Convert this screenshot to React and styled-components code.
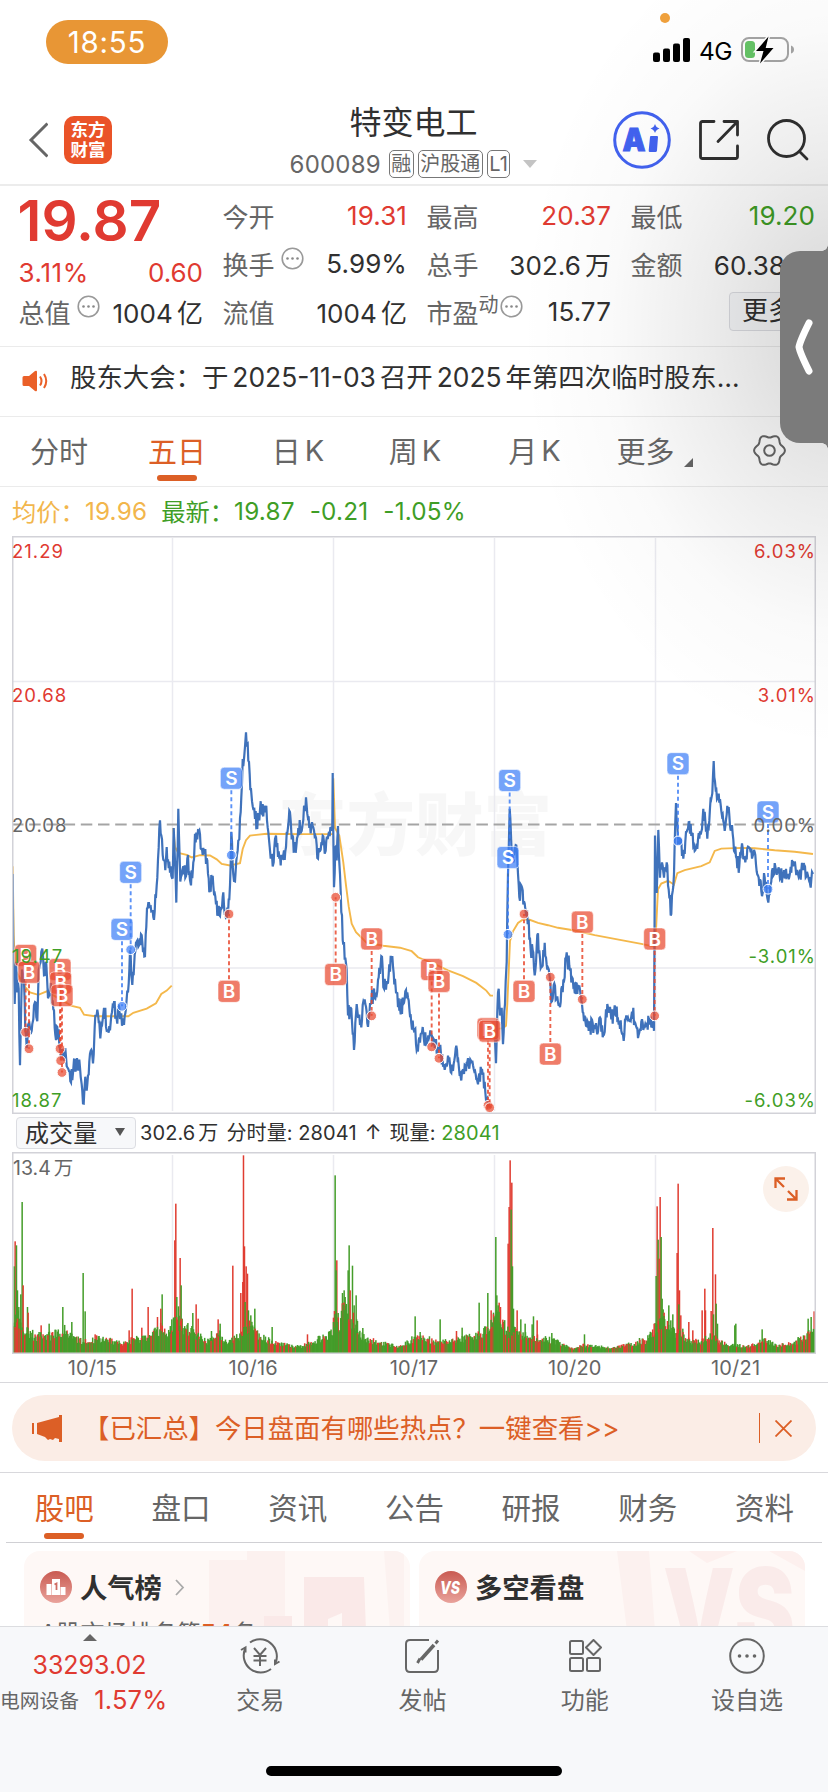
import React, { memo } from "react";
import styled, { createGlobalStyle, css } from "styled-components";

const RED = "#e03a31";
const GREEN = "#3f9e26";
const ORANGE = "#dc5f26";
const DARK = "#303030";
const GREY = "#666666";

const GlobalStyle = createGlobalStyle`
    * {
        box-sizing: border-box;
    }

    body {
        margin: 0;
        background: #fff;
        font-family: Inter, "Noto Sans CJK SC", sans-serif;
        color: ${DARK};
    }
`;

// --- styles ---

const underline = css`
    &::after {
        content: "";
        position: absolute;
        left: 50%;
        width: 40px;
        height: 6px;
        margin-left: -20px;
        border-radius: 3px;
        background: ${ORANGE};
    }
`;

const Page = styled.div`
    position: relative;
    display: flex;
    flex-direction: column;
    width: 828px;
    height: 1792px;
    overflow: hidden;
    background: #fff;
    white-space: nowrap;
`;

const StatusBar = styled.div`
    position: relative;
    display: flex;
    flex: none;
    justify-content: space-between;
    align-items: flex-start;
    height: 92px;
    padding: 20px 33px 0 46px;
`;

const Clock = styled.div`
    width: 122px;
    height: 44px;
    border-radius: 22px;
    background: #e89635;
    color: #fff;
    font-size: 29.5px;
    line-height: 45px;
    letter-spacing: 0.8px;
    text-align: center;
`;

const StatusIcons = styled.div`
    display: flex;
    align-items: center;
    gap: 8px;
    height: 60px;
`;

const Network = styled.div`
    margin: 2px 1px 0 0;
    font-size: 24.5px;
    letter-spacing: -0.5px;
    color: #000;
`;

const RecordDot = styled.div`
    position: absolute;
    top: 13px;
    left: 660px;
    width: 10px;
    height: 10px;
    border-radius: 50%;
    background: #f0a13c;
`;

const NavBar = styled.div`
    display: grid;
    flex: none;
    grid-template-columns: 1fr auto 1fr;
    height: 94px;
    padding: 0 19px 0 28px;
    border-bottom: 2px solid #ececec;
`;

const NavLeft = styled.div`
    display: flex;
    align-items: center;
    gap: 16px;
    height: 96px;
`;

const Logo = styled.div`
    display: flex;
    flex-direction: column;
    align-items: center;
    justify-content: center;
    width: 48px;
    height: 48px;
    padding-bottom: 1px;
    border-radius: 10px;
    background: #ea5328;
    color: #fff;
    font-size: 17.5px;
    font-weight: 700;
    line-height: 19.5px;
`;

const NavTitle = styled.div`
    display: flex;
    flex-direction: column;
    align-items: center;
    padding: 9px 10px 0 0;
`;

const StockName = styled.div`
    font-size: 32px;
    line-height: 44px;
`;

const StockMeta = styled.div`
    display: flex;
    align-items: center;
    height: 30px;
    margin-top: 4px;
    gap: 4px;
    color: ${GREY};
`;

const StockCode = styled.div`
    margin-right: 4px;
    font-size: 24px;
    letter-spacing: 0.2px;
`;

const Tag = styled.div`
    padding: 0 1.5px;
    border: 1.5px solid #777;
    border-radius: 5px;
    font-size: 20px;
    line-height: 26px;
`;

const MetaCaret = styled.div`
    margin-left: 9px;
    border: 7px solid transparent;
    border-top: 8px solid #c4c4c4;
    border-bottom: 0;
`;

const NavRight = styled.div`
    display: flex;
    justify-content: flex-end;
    align-items: center;
    gap: 27px;
    height: 96px;
`;

const QuotePanel = styled.div`
    display: grid;
    flex: none;
    grid-template-columns: repeat(4, 184.5px);
    grid-template-rows: repeat(3, 48px);
    column-gap: 19.5px;
    height: 161px;
    padding: 5px 0 0 18.5px;
    border-bottom: 1.5px solid #ebebeb;
`;

const Price = styled.div`
    grid-row: 1 / 3;
    color: ${RED};
`;

const PriceValue = styled.div`
    margin-left: -1px;
    font-size: 56.5px;
    font-weight: 600;
    line-height: 59px;
`;

const PriceChange = styled.div`
    display: flex;
    justify-content: space-between;
    margin-top: 5px;
    font-size: 26px;
    line-height: 36px;
`;

const ChangePercent = styled.span`
    letter-spacing: 0.6px;
`;

const QuoteCell = styled.div`
    display: flex;
    justify-content: space-between;
    align-items: center;
    height: 48px;
`;

const QuoteLabel = styled.div`
    display: flex;
    align-items: center;
    font-size: 26px;
    color: ${GREY};
`;

const Sup = styled.span`
    margin-bottom: 15px;
    font-size: 20px;
`;

const Info = styled.span`
    display: flex;
    margin-left: ${(props) => (props.$tight ? 1 : 6)}px;
    margin-bottom: 9px;
`;

const QuoteValue = styled.div`
    font-size: 26px;
    letter-spacing: 0.1px;
    color: ${(props) => props.$color || DARK};
`;

const Unit = styled.span`
    margin-left: 0.15em;
`;

const MoreCell = styled.div`
    display: flex;
    align-items: center;
    justify-content: flex-end;
`;

const MoreButton = styled.div`
    width: 86px;
    height: 39px;
    padding-left: 12px;
    border: 1.5px solid #dcdde2;
    border-radius: 4px;
    background: #f7f8fa;
    font-size: 26px;
    line-height: 35px;
`;

const Notice = styled.div`
    display: flex;
    flex: none;
    align-items: center;
    gap: 21px;
    height: 70px;
    padding: 0 0 12px 22px;
    border-bottom: 1.5px solid #ebebeb;

    svg {
        margin-top: 11px;
    }
`;

const NoticeText = styled.div`
    font-size: 26.4px;
`;

const Num = styled.span`
    margin: 0 4px;
`;

const Periods = styled.div`
    display: flex;
    flex: none;
    align-items: center;
    height: 70px;
    border-bottom: 1.5px solid #ebebeb;
`;

const Period = styled.div`
    position: relative;
    display: flex;
    flex: none;
    justify-content: center;
    align-items: center;
    width: ${(props) => props.$width}px;
    height: 68px;
    padding-bottom: 3px;
    font-size: 29px;
    color: ${(props) => (props.$active ? ORANGE : GREY)};

    ${(props) => (props.$active ? underline : null)}

    &::after {
        top: 57px;
    }
`;

const Latin = styled.span`
    margin-left: 4px;
`;

const Corner = styled.span`
    position: absolute;
    right: -1px;
    bottom: 19px;
    border-bottom: 9px solid ${GREY};
    border-left: 9px solid transparent;
`;

const Settings = styled.div`
    display: flex;
    justify-content: center;
    flex: 1;
    padding: 0 0 2px 19px;
`;

const Legend = styled.div`
    display: flex;
    flex: none;
    align-items: center;
    gap: 14px;
    height: 49px;
    padding: 0 0 2px 12px;
`;

const LegendItem = styled.div`
    display: flex;
    align-items: center;
    font-size: 24.3px;
    color: ${(props) => props.$color};
`;

const LegendNum = styled.span`
    letter-spacing: 0.2px;

    & + & {
        margin-left: 15px;
    }
`;

const ChartBox = styled.div`
    position: relative;
    flex: none;
    height: ${(props) => props.$height}px;
    margin: 0 12px;

    svg {
        display: block;
    }
`;

const Scale = styled.div`
    position: absolute;
    top: 0;
    ${(props) => (props.$right ? "right: 0;" : "left: 0;")}
`;

const ScaleLabel = styled.div`
    position: absolute;
    top: ${(props) => props.$top}px;
    ${(props) => (props.$right ? "right: 0;" : "left: 0;")}
    font-size: 18.5px;
    line-height: 22px;
    letter-spacing: 1px;
    color: ${(props) => props.$color};
`;

const VolumeHead = styled.div`
    display: flex;
    flex: none;
    align-items: center;
    gap: 8px;
    height: 38px;
    padding: 0 0 3px 16px;
    font-size: 20px;
    letter-spacing: 0.1px;
`;

const Select = styled.div`
    display: flex;
    justify-content: space-between;
    align-items: center;
    width: 120px;
    height: 32px;
    margin: 2px -4px 0 0;
    padding: 0 10px 2px 8px;
    border: 1px solid #dcdde2;
    border-radius: 4px;
    background: #f7f8fa;
    font-size: 24px;
`;

const SelectCaret = styled.span`
    border: 5px solid transparent;
    border-top: 8px solid #555;
    border-bottom: 0;
`;

const CurrentVolume = styled.span`
    color: ${GREEN};
`;

const VolumeMax = styled.div`
    position: absolute;
    top: 4px;
    left: 1px;
    font-size: 19.5px;
    line-height: 24px;
    color: ${GREY};
`;

const Expand = styled.div`
    position: absolute;
    top: 14px;
    right: 7px;
    display: flex;
    align-items: center;
    justify-content: center;
    width: 46px;
    height: 46px;
    border-radius: 50%;
    background: #fbf1ea;
`;

const Dates = styled.div`
    display: grid;
    flex: none;
    grid-template-columns: repeat(5, 1fr);
    height: 29px;
    padding: 0 12px;
    border-bottom: 1.5px solid #d8d8dc;
    font-size: 20px;
    line-height: 28px;
    letter-spacing: 0.2px;
    text-align: center;
    color: ${GREY};
`;

const PromoWrap = styled.div`
    flex: none;
    height: 90px;
    padding: 12px 12px 0;
    border-bottom: 1.5px solid #d8d8dc;
`;

const Promo = styled.div`
    display: flex;
    align-items: center;
    height: 66px;
    padding: 0 24px 0 20px;
    border-radius: 33px;
    background: #fbede6;
    color: ${ORANGE};
`;

const PromoText = styled.div`
    flex: 1;
    margin: 0 0 4px 20px;
    font-size: 26.4px;
`;

const PromoDivider = styled.div`
    width: 1.5px;
    height: 30px;
    margin-right: 15px;
    background: ${ORANGE};
`;

const Sections = styled.div`
    display: grid;
    flex: none;
    grid-template-columns: repeat(7, 116.7px);
    height: 70px;
    margin: 0 6px;
    border-bottom: 1.5px solid #d0d0d4;
`;

const Section = styled.div`
    position: relative;
    font-size: 29.5px;
    line-height: 70px;
    text-align: center;
    color: ${(props) => (props.$active ? ORANGE : GREY)};

    ${(props) => (props.$active ? underline : null)}

    &::after {
        top: 60px;
    }
`;

const Cards = styled.div`
    display: grid;
    flex: none;
    grid-template-columns: 386px 386px;
    gap: 9px;
    height: 83px;
    padding: 8px 0 0 24px;
    overflow: hidden;
`;

const Card = styled.div`
    position: relative;
    height: 120px;
    padding: 16px 16px 0;
    border-radius: 16px;
    background: #fef8f6;
    overflow: hidden;
`;

const CardArt = styled.svg`
    position: absolute;
    top: 0;
    left: 0;
`;

const CardHead = styled.div`
    position: relative;
    display: flex;
    align-items: center;
    height: 40px;
`;

const CardTitle = styled.div`
    margin: 0 13px 3px 8px;
    font-size: 27.3px;
    font-weight: 700;
`;

const CardText = styled.div`
    position: relative;
    margin-top: 9px;
    font-size: 24px;
    line-height: 36px;
    color: ${GREY};
`;

const Rank = styled.b`
    color: ${ORANGE};
`;

const BottomBar = styled.div`
    position: relative;
    display: grid;
    flex: 1;
    grid-template-columns: 179px repeat(4, 162.3px);
    border-top: 1.5px solid #dcdde0;
    background: #f7f8fa;
    color: ${GREY};
`;

const IndexCell = styled.div`
    display: flex;
    flex-direction: column;
    align-items: center;
    padding-top: 7px;
`;

const IndexCaret = styled.div`
    border: 7px solid transparent;
    border-top: 0;
    border-bottom: 7px solid ${GREY};
`;

const IndexValue = styled.div`
    margin-top: 8px;
    font-size: 25px;
    line-height: 32px;
    color: ${RED};
`;

const IndexRow = styled.div`
    display: flex;
    align-items: center;
    gap: 15px;
    align-self: flex-start;
    height: 36px;
`;

const IndexName = styled.div`
    font-size: 19.8px;
`;

const IndexChange = styled.div`
    font-size: 25.5px;
    letter-spacing: 0.2px;
    color: ${RED};
`;

const Action = styled.div`
    display: flex;
    flex-direction: column;
    align-items: center;
    font-size: 24px;
    line-height: 36px;
`;

const ActionIcon = styled.div`
    display: flex;
    align-items: center;
    height: 56px;
    padding-top: 2px;
`;

const HomeIndicator = styled.div`
    position: absolute;
    left: 266px;
    bottom: 16px;
    width: 296px;
    height: 10px;
    border-radius: 5px;
    background: #000;
`;

const Shade = styled.div`
    position: absolute;
    inset: 0;
    pointer-events: none;
    background: radial-gradient(
        ellipse 320px 420px at 840px 330px,
        rgba(0, 0, 0, 0.17),
        rgba(0, 0, 0, 0.075) 42%,
        rgba(0, 0, 0, 0.02) 72%,
        transparent
    );
`;

const Handle = styled.div`
    position: absolute;
    top: 251px;
    right: 0;
    display: flex;
    align-items: center;
    width: 48px;
    height: 192px;
    padding-left: 15px;
    border-radius: 20px 0 0 20px;
    background: #7b7b7b;

    &::before,
    &::after {
        content: "";
        position: absolute;
        right: 0;
        width: 6px;
        height: 6px;
    }

    &::before {
        top: -6px;
        background: radial-gradient(circle at 0 0, transparent 5.5px, #7b7b7b 6px);
    }

    &::after {
        bottom: -6px;
        background: radial-gradient(circle at 0 100%, transparent 5.5px, #7b7b7b 6px);
    }
`;

// --- data ---

const quotes = [
    { label: "今开", value: "19.31", color: RED },
    { label: "最高", value: "20.37", color: RED },
    { label: "最低", value: "19.20", color: GREEN },
    { label: "换手", value: "5.99%", info: true },
    { label: "总手", value: "302.6", unit: "万" },
    { label: "金额", value: "60.38", unit: "亿" },
    { label: "总值", value: "1004", unit: "亿", info: true },
    { label: "流值", value: "1004", unit: "亿" },
    { label: "市盈", sup: "动", value: "15.77", info: true },
];

const periods = [
    { title: "分时", width: 118 },
    { title: "五日", width: 118, active: true },
    { title: "日", latin: "K", width: 124 },
    { title: "周", latin: "K", width: 110 },
    { title: "月", latin: "K", width: 129 },
    { title: "更多", more: true, width: 93 },
];

const priceScale = [
    { top: 4, color: RED, price: "21.29", percent: "6.03%" },
    { top: 148, color: RED, price: "20.68", percent: "3.01%" },
    { top: 278, color: GREY, price: "20.08", percent: "0.00%" },
    { top: 409, color: GREEN, price: "19.47", percent: "-3.01%" },
    { top: 553, color: GREEN, price: "18.87", percent: "-6.03%" },
];

const sections = ["股吧", "盘口", "资讯", "公告", "研报", "财务", "资料"];

const dates = ["10/15", "10/16", "10/17", "10/20", "10/21"];

// chart samples are raw units, toX / toY turn them into pixels
const toX = (x) => x / 3 - 12;
const toY = (y) => (y - 17) / 2.6133;

const priceDays = [
    "38,900 40,1130 44,1240 48,1130 52,1210 56,1200 60,1400 66,1150 72,1180 76,1310 80,1355 86,1290 95,1310 100,1280 105,1235 112,1285 116,1150 122,1130 127,1095 132,1165 137,1130 144,1225 150,1200 158,1230 166,1320 172,1300 180,1356 190,1380 196,1355 205,1410 213,1445 222,1385 229,1410 238,1385 245,1450 251,1500 256,1430 262,1450 270,1370 279,1395 284,1300 292,1255 301,1330 312,1250 326,1315 334,1270 342,1235 350,1280 358,1250 368,1290 376,1265 384,1210 390,1100 397,1190 404,1110 415,1090 425,1060 435,1115 441,990 452,985 462,1020 470,930 480,760 488,850 496,890 500,830 506,885 512,880 518,910 521,780 529,975 535,730 541,920 550,880 556,910 562,860 573,930 580,870 585,795 592,810 598,785 608,850 616,835 624,900 630,940 638,905 648,980 660,1010 668,960 676,1000 684,1005 690,930 694,790 698,880 705,920 711,850 718,810 724,700 728,600 733,590 738,530 743,560 749,640 756,710 763,730 772,780 782,710 790,750 797,730 805,790 812,860 821,870 828,800 838,860 848,860 858,830 868,735 875,810 887,845 895,780 908,770 918,700 928,780 936,765 946,800 954,860 968,800 977,840 987,790 997,775 998,636 1002,935 1006,830 1010,865 1014,775 1018,870 1024,1000 1030,1085 1040,1150 1044,1270 1052,1250 1062,1360 1070,1240 1082,1290 1092,1240 1102,1290 1112,1240 1120,1210 1128,1215 1136,1170 1144,1115 1152,1200 1160,1180 1177,1115 1188,1210 1200,1250 1210,1240 1222,1210 1232,1270 1242,1310 1254,1360 1268,1300 1279,1350 1294,1320 1306,1350 1319,1360 1332,1400 1344,1375 1359,1415 1371,1360 1384,1440 1396,1400 1411,1385 1421,1410 1434,1450 1446,1410 1456,1470 1464,1505 1470,1510",
    "1483,1330 1488,1395 1492,1260 1496,1200 1500,1270 1505,1250 1509,1345 1515,1240 1520,1130 1524,900 1529,730 1534,820 1540,870 1547,825 1554,900 1560,970 1564,930 1570,980 1579,1010 1586,1020 1592,1100 1598,1100 1604,1165 1612,1060 1620,1120 1628,1140 1634,1080 1642,1150 1649,1170 1654,1235 1661,1190 1672,1220 1682,1235 1690,1180 1698,1120 1708,1140 1716,1170 1724,1210 1734,1190 1744,1230 1754,1270 1766,1310 1778,1290 1790,1310 1800,1275 1812,1320 1822,1240 1834,1280 1846,1250 1858,1285 1869,1320 1882,1280 1896,1260 1906,1290 1916,1320 1926,1280 1939,1300 1952,1275 1962,1310 1965,800 1970,950 1975,785 1980,910 1986,870 1992,910 2000,870 2008,960 2014,1005 2022,900 2028,715 2034,820 2042,810 2050,860 2060,790 2072,770 2084,840 2094,810 2104,790 2110,730 2118,790 2126,780 2132,700 2137,690 2141,605 2147,680 2154,700 2162,720 2172,770 2184,740 2194,780 2202,840 2210,860 2218,880 2226,820 2236,870 2246,830 2256,860 2266,850 2276,910 2284,945 2294,910 2305,975 2314,920 2326,880 2342,910 2352,890 2364,900 2379,880 2394,900 2409,890 2424,905 2430,925 2439,900",
];

const averageDays = [
    "38,880 41,1060 45,1150 75,1195 90,1210 115,1216 140,1207 155,1215 215,1245 240,1250 252,1268 285,1272 385,1272 400,1263 440,1252 468,1238 484,1214 500,1205 515,1192",
    "520,780 525,830 535,845 560,850 575,857 600,851 630,852 650,862 665,874 690,878 720,872 728,835 738,812 750,800 800,795 900,796 998,796",
    "1000,650 1005,780 1018,800 1030,870 1038,930 1046,985 1055,1030 1068,1052 1100,1080 1150,1088 1200,1093 1235,1102 1254,1118 1304,1136 1344,1152 1389,1167 1429,1185 1459,1205 1471,1218 1479,1218",
    "1483,1330 1494,1305 1509,1303 1518,1297 1522,1240 1530,1075 1539,1050 1554,1028 1569,1019 1589,1020 1614,1028 1644,1034 1674,1041 1724,1048 1784,1060 1864,1073 1924,1083 1962,1090",
    "1965,1100 1974,940 1984,925 2004,918 2022,928 2032,898 2054,890 2104,880 2129,870 2144,840 2164,834 2224,832 2264,833 2324,838 2384,842 2439,848",
];

// [side, x, badge y, dot y]
const trades = [
    ["B", 77, 1113, 1314],
    ["B", 87, 1157, 1357],
    ["B", 180, 1150, 1357],
    ["B", 182, 1185, 1388],
    ["B", 186, 1218, 1419],
    ["S", 366, 1045, 1246],
    ["S", 392, 896, 1098],
    ["S", 694, 650, 851],
    ["B", 687, 1207, 1005],
    ["B", 1007, 1163, 961],
    ["B", 1115, 1070, 1271],
    ["B", 1295, 1150, 1352],
    ["B", 1317, 1181, 1382],
    ["B", 1464, 1305, 1505],
    ["B", 1469, 1311, 1511],
    ["S", 1529, 656, 857],
    ["S", 1524, 857, 1058],
    ["B", 1572, 1207, 1005],
    ["B", 1651, 1371, 1170],
    ["B", 1747, 1026, 1228],
    ["B", 1964, 1070, 1271],
    ["S", 2034, 612, 814],
    ["S", 2304, 738, 940],
];

const volumeBase =
    "38,120 70,80 100,50 140,45 190,70 215,45 250,30 290,40 380,25 400,40 440,40 480,70 500,55 520,95 550,80 580,60 620,30 660,60 680,25 720,50 750,80 780,45 830,25 900,15 960,40 995,60 1010,110 1020,80 1030,170 1040,110 1050,100 1070,90 1080,50 1110,35 1150,25 1200,15 1240,40 1260,55 1300,30 1380,40 1440,50 1480,95 1500,110 1520,60 1540,70 1560,50 1620,40 1660,35 1720,8 1750,20 1840,12 1940,35 1965,70 1985,100 2010,60 2040,60 2060,35 2100,30 2140,50 2160,30 2240,15 2290,35 2330,20 2380,25 2420,50 2444,90";

const volumeSpikes = {
    up: "45,393 69,525 84,607 123,645 285,672 396,535 387,660 425,652 444,590 472,620 482,595 524,390 527,280 540,443 588,582 594,625 654,627 698,466 722,548 728,515 730,135 733,408 738,468 742,490 922,672 1000,622 1003,602 1010,450 1050,540 1369,662 1473,600 1497,577 1501,590 1508,628 1524,400 1527,290 1530,150 1535,217 1551,600 1611,630 1962,640 1971,288 1977,445 1980,260 1992,607 2002,632 2031,428 2034,220 2038,540 2042,615 2066,635 2078,660 2106,600 2114,535 2116,600 2133,602 2138,353 2146,492 2442,603",
    down: "42,468 49,405 52,540 66,275 56,590 62,552 82,590 147,640 188,590 215,635 249,488 255,603 486,552 515,627 530,560 543,525 535,588 546,625 578,608 634,662 660,640 735,575 745,600 752,615 764,595 816,650 1005,195 1008,480 1014,608 1027,548 1032,540 1035,560 1044,480 1047,405 1057,466 1062,585 1068,555 1072,632 1088,653 1245,618 1260,665 1320,627 1386,652 1437,577 1463,548 1480,607 1487,380 1490,555 1494,585 1533,298 1537,468 1540,595 1562,627 1575,640 1600,618 1596,642 1655,668 1753,672 1918,683 1968,497 1974,388 1983,380 1986,565 1989,597 2006,585 2012,630 2018,612 2036,582 2048,655 2140,612 2148,580 2152,640 2204,645 2207,640 2286,657 2394,680 2410,675 2424,625 2433,620",
};

const parse = (str) => str.split(" ").map((pair) => pair.split(",").map(Number));

const createRandom = (seed) => () => {
    seed = (seed * 16807) % 2147483647;
    return seed / 2147483647;
};

const valueAt = (points, x) => {
    const i = points.findIndex((point) => point[0] >= x);
    if (i < 1) return points[0][1];
    const [x0, y0] = points[i - 1];
    const [x1, y1] = points[i];
    return y0 + ((y1 - y0) * (x - x0)) / (x1 - x0);
};

const toPoints = (list) =>
    list.map(([x, y]) => `${toX(x).toFixed(1)},${toY(y).toFixed(1)}`).join(" ");

const buildPrice = (str, seed) => {
    const random = createRandom(seed);
    const keys = parse(str);
    const result = [];
    keys.forEach(([x, y], i) => {
        result.push([x, y]);
        const next = keys[i + 1];
        if (!next) return;
        for (let step = x + 2; step < next[0] - 1; step += 2) {
            result.push([step, valueAt(keys, step) + (random() - 0.5) * 46]);
        }
    });
    return toPoints(result);
};

const buildVolume = () => {
    const random = createRandom(77);
    const base = parse(volumeBase);
    const bars = [];
    for (let x = 40; x < 2443; x += 2.4) {
        const height = 4 + valueAt(base, x) * (0.65 + random() * 0.6);
        bars.push({ x, height, up: random() > 0.7 });
    }
    parse(volumeSpikes.up).forEach(([x, y]) =>
        bars.push({ x, height: 728 - y, up: true })
    );
    parse(volumeSpikes.down).forEach(([x, y]) =>
        bars.push({ x, height: 728 - y, up: false })
    );
    // tall bars first, so the short ones stay visible in front
    return bars.sort((a, b) => b.height - a.height);
};

const buildGear = () => {
    const points = [];
    for (let i = 0; i < 72; i++) {
        const angle = (i * Math.PI) / 36;
        const radius = 13.9 + 1.5 * Math.cos(6 * angle);
        const x = 16.5 + radius * Math.cos(angle);
        const y = 16.5 + radius * 1.04 * Math.sin(angle);
        points.push(`${x.toFixed(2)},${y.toFixed(2)}`);
    }
    return points.join(" ");
};

const priceLines = priceDays.map((day, key) => buildPrice(day, key + 11));
const averageLines = averageDays.map((day) => toPoints(parse(day)));
const volumeBars = buildVolume();
const gearPoints = buildGear();

// --- icons ---

const SignalIcon = () => (
    <svg width="38" height="24" viewBox="0 0 38 24">
        <rect x="0" y="14.5" width="7" height="9.5" rx="2" />
        <rect x="10" y="10.5" width="7" height="13.5" rx="2" />
        <rect x="20" y="5.5" width="7" height="18.5" rx="2" />
        <rect x="30" y="0" width="7" height="24" rx="2" />
    </svg>
);

const BatteryIcon = () => (
    <svg width="54" height="28" viewBox="0 0 54 28">
        <rect x="1" y="2" width="46" height="23" rx="7" fill="none" stroke="#a5a5a5" strokeWidth="2" />
        <path d="M50 9.5q3 1 3 4t-3 4z" fill="#a5a5a5" />
        <rect x="4" y="5" width="10" height="17" rx="3.5" fill="#65c466" />
        <path
            d="M27.5 0.5L15 15h7.5l-3.5 12.5L32.5 12h-7.8z"
            stroke="#fff"
            strokeWidth="3"
            paintOrder="stroke"
        />
    </svg>
);

const BackIcon = () => (
    <svg width="20" height="36" viewBox="0 0 20 36" fill="none" stroke="#666" strokeWidth="3">
        <path d="M19.5 1.500L3 18l16.500 16.500" />
    </svg>
);

const AiIcon = () => (
    <svg width="58" height="58" viewBox="0 0 58 58">
        <circle cx="29" cy="29" r="27.3" fill="#fff" stroke="#4262f0" strokeWidth="3" />
        <text x="9.5" y="40" fontSize="31" fontWeight="900" fill="#4262f0" fontFamily="Inter" stroke="#4262f0" strokeWidth="1" textLength="23" lengthAdjust="spacingAndGlyphs">
            A
        </text>
        <path d="M38 25h6q1 0 1 1l-1 13.500q-.2 1.500-1.500 1.500H37q-1.500 0-1.300-1.500L37 26q0-1 1-1z" fill="#4262f0" />
        <path d="M42 13q1 3.500 4.500 4.500q-3.500 1-4.500 4.500q-1-3.500-4.500-4.500q3.500-1 4.500-4.500z" fill="#4262f0" />
    </svg>
);

const ShareIcon = () => (
    <svg width="42" height="42" viewBox="0 0 42 42" fill="none" stroke="#303030" strokeWidth="2.8" strokeLinecap="round" strokeLinejoin="round">
        <path d="M16 2.500H4.500q-2 0-2 2v33q0 2 2 2h33q2 0 2-2V27" />
        <path d="M26 2.500h13.500V16M39 3L20 22.500" />
    </svg>
);

const SearchIcon = () => (
    <svg width="42" height="42" viewBox="0 0 42 42" fill="none" stroke="#303030" strokeWidth="2.8" strokeLinecap="round">
        <circle cx="19.5" cy="19.5" r="18" />
        <path d="M32.500 32.500l7.500 7.500" />
    </svg>
);

const InfoIcon = () => (
    <svg width="23" height="23" viewBox="0 0 23 23" fill="#888">
        <circle cx="11.5" cy="11.5" r="10.3" fill="none" stroke="#999" strokeWidth="1.6" />
        <circle cx="6.5" cy="11.5" r="1.3" />
        <circle cx="11.5" cy="11.5" r="1.3" />
        <circle cx="16.5" cy="11.5" r="1.3" />
    </svg>
);

const SpeakerIcon = () => (
    <svg width="27" height="22" viewBox="0 0 27 22">
        <path d="M2 6h5l6-5q2-1 2 1v18q0 2-2 1l-6-5H2q-1.500 0-1.500-1.500v-7Q.5 6 2 6z" fill="#ea6028" />
        <path d="M18 6.500q3 4.500 0 9M22 4q4.500 7 0 14" fill="none" stroke="#ea6028" strokeWidth="2" />
    </svg>
);

const GearIcon = () => (
    <svg width="33" height="33" viewBox="0 0 33 33" fill="none" stroke="#666" strokeWidth="2">
        <polygon points={gearPoints} strokeLinejoin="round" />
        <circle cx="16.5" cy="16.5" r="5.3" />
    </svg>
);

const ExpandIcon = () => (
    <svg width="24" height="24" viewBox="0 0 24 24" fill="none" stroke={ORANGE} strokeWidth="2.3">
        <path d="M1.500 11V1.500H11M1.500 1.500l8.500 8.500M22.500 13v9.500H13M22.500 22.500L14 14" />
    </svg>
);

const HornIcon = () => (
    <svg width="31" height="27" viewBox="0 0 31 27" fill={ORANGE}>
        <path d="M0 8h2v11H0zM5 8L27 2V0h3v27h-3v-3l-4-1-2 2-3-1-2 1-3-3-8-3z" />
    </svg>
);

const CloseIcon = () => (
    <svg width="17" height="17" viewBox="0 0 17 17" fill="none" stroke={ORANGE} strokeWidth="1.8">
        <path d="M.5.5l16 16M16.500.5l-16 16" />
    </svg>
);

const RankIcon = () => (
    <svg width="32" height="32" viewBox="0 0 32 32">
        <defs>
            <linearGradient id="badge" x1="0" y1="0" x2="0" y2="1">
                <stop offset="0" stopColor="#c95b52" />
                <stop offset="1" stopColor="#e9a29b" />
            </linearGradient>
        </defs>
        <circle cx="16" cy="16" r="16" fill="url(#badge)" />
        <path d="M6.500 13h5v11h-5zM12 8h8v16h-8zM20.500 16h5v8h-5z" fill="#fff" />
        <path d="M14.500 13.500l2-1v6.500" stroke="#cf6d65" strokeWidth="1.8" fill="none" />
    </svg>
);

const VersusIcon = () => (
    <svg width="32" height="32" viewBox="0 0 32 32">
        <circle cx="16" cy="16" r="16" fill="url(#badge)" />
        <text x="15" y="22.5" textAnchor="middle" fontSize="18" fontWeight="800" fontStyle="italic" fill="#fff" fontFamily="Inter" textLength="20" lengthAdjust="spacingAndGlyphs">
            VS
        </text>
    </svg>
);

const TradeIcon = () => (
    <svg width="40" height="36" viewBox="0 0 40 36" fill="none" stroke="#666" strokeWidth="2">
        <path d="M10 4.500A17 17 0 0 1 35.500 25M31 31A17 17 0 0 1 5 11" />
        <path d="M1 12l4.500-2.500v5M39.500 23.500L35 26v-4.500M14 10l6 7 6-7M20 17v11M13.500 18h13M13.500 22.500h13" />
    </svg>
);

const PostIcon = () => (
    <svg width="36" height="36" viewBox="0 0 36 36" fill="none" stroke="#666" strokeWidth="2">
        <path d="M25 2H6Q2 2 2 6v24q0 4 4 4h24q4 0 4-4V12" />
        <path d="M30 7L17 21.500" strokeWidth="3.6" />
        <path d="M31.500 5.500L34 2.500M16 20.500l-2.500 4.500" strokeWidth="2.8" />
    </svg>
);

const ToolsIcon = () => (
    <svg width="34" height="34" viewBox="0 0 34 34" fill="none" stroke="#666" strokeWidth="2">
        <rect x="2" y="2" width="13" height="13" rx="1.5" />
        <rect x="2" y="19" width="13" height="13" rx="1.5" />
        <rect x="19" y="19" width="13" height="13" rx="1.5" />
        <path d="M25.500 1l7.500 7.500-7.500 7.500L18 8.500z" strokeLinejoin="round" />
    </svg>
);

const OptionalIcon = () => (
    <svg width="36" height="36" viewBox="0 0 36 36" fill="#666">
        <circle cx="18" cy="18" r="16.8" fill="none" stroke="#666" strokeWidth="2" />
        <circle cx="10.5" cy="18" r="1.8" />
        <circle cx="18" cy="18" r="1.8" />
        <circle cx="25.5" cy="18" r="1.8" />
    </svg>
);

const actions = [
    { title: "交易", Icon: TradeIcon },
    { title: "发帖", Icon: PostIcon },
    { title: "功能", Icon: ToolsIcon },
    { title: "设自选", Icon: OptionalIcon },
];

// --- components ---

const Quote = ({ label, sup, value, unit, info, color }) => (
    <QuoteCell>
        <QuoteLabel>
            {label}
            {sup ? <Sup>{sup}</Sup> : null}
            {info ? (
                <Info $tight={Boolean(sup)}>
                    <InfoIcon />
                </Info>
            ) : null}
        </QuoteLabel>
        <QuoteValue $color={color}>
            {value}
            {unit ? <Unit>{unit}</Unit> : null}
        </QuoteValue>
    </QuoteCell>
);

const Trade = memo(({ side, x, badgeY, dotY }) => {
    const color = side === "S" ? "#3f7ff6" : "#e9492f";
    const cx = toX(x);
    const by = toY(badgeY);
    const dy = toY(dotY);
    return (
        <g>
            <line x1={cx} x2={cx} y1={by + (dy > by ? 12 : -12)} y2={dy} stroke={color} strokeWidth="1.9" strokeDasharray="4 3" opacity="0.85" />
            <circle cx={cx} cy={dy} r="4.9" fill={color} fillOpacity="0.72" stroke="#fff" strokeWidth="1" />
            <rect x={cx - 11} y={by - 11} width="22" height="22" rx="4" fill={color} fillOpacity="0.72" stroke="#fff" strokeWidth="0.8" strokeOpacity="0.7" />
            <text x={cx} y={by + 6.8} textAnchor="middle" fontSize="19" fontWeight="600" fill="#fff" fontFamily="Inter">
                {side}
            </text>
        </g>
    );
});

const PriceChart = () => (
    <ChartBox $height={578}>
        <svg width="804" height="578" viewBox="0 0 804 578">
            <text x="266" y="314" fontSize="68.5" fontWeight="900" fill="#000" fillOpacity="0.03" fontFamily="Noto Sans CJK SC">
                东方财富
            </text>
            <path
                d="M0 145.500H804M0 432H804M160.500 2V575M321.500 2V575M482.500 2V575M643.500 2V575"
                stroke="#eaeaf0"
                strokeWidth="1.5"
            />
            <path d="M0 288.500H804" stroke="#a5a5a5" strokeWidth="1.8" strokeDasharray="11.5 5.7" />
            {averageLines.map((points, key) => (
                <polyline key={key} points={points} fill="none" stroke="#f4b84b" strokeWidth="1.9" />
            ))}
            {priceLines.map((points, key) => (
                <polyline key={key} points={points} fill="none" stroke="#3f72bb" strokeWidth="2.2" />
            ))}
            {trades.map(([side, x, badgeY, dotY], key) => (
                <Trade key={key} side={side} x={x} badgeY={badgeY} dotY={dotY} />
            ))}
            <rect x="0.75" y="0.75" width="802.5" height="576.5" fill="none" stroke="#d2d2d8" strokeWidth="1.5" />
        </svg>
        <Scale>
            {priceScale.map(({ top, color, price }) => (
                <ScaleLabel key={top} $top={top} $color={color}>
                    {price}
                </ScaleLabel>
            ))}
        </Scale>
        <Scale $right>
            {priceScale.map(({ top, color, percent }) => (
                <ScaleLabel key={top} $right $top={top} $color={color}>
                    {percent}
                </ScaleLabel>
            ))}
        </Scale>
    </ChartBox>
);

const VolumeChart = () => (
    <ChartBox $height={202}>
        <svg width="804" height="202" viewBox="0 0 804 202">
            <path d="M160.500 3V201M321.500 3V201M482.500 3V201M643.500 3V201" stroke="#eaeaf0" strokeWidth="1.5" />
            {volumeBars.map(({ x, height, up }, key) => (
                <rect
                    key={key}
                    x={toX(x) - 0.6}
                    y={201 - height / 3}
                    width="1.5"
                    height={height / 3}
                    fill={up ? "#e03c31" : "#449d2a"}
                />
            ))}
            <rect x="0.75" y="0.75" width="802.5" height="200.5" fill="none" stroke="#d2d2d8" strokeWidth="1.5" />
        </svg>
        <VolumeMax>
            13.4<Unit>万</Unit>
        </VolumeMax>
        <Expand>
            <ExpandIcon />
        </Expand>
    </ChartBox>
);

const App = () => (
    <Page>
        <GlobalStyle />
        <StatusBar>
            <Clock>18:55</Clock>
            <StatusIcons>
                <SignalIcon />
                <Network>4G</Network>
                <BatteryIcon />
            </StatusIcons>
            <RecordDot />
        </StatusBar>
        <NavBar>
            <NavLeft>
                <BackIcon />
                <Logo>
                    <span>东方</span>
                    <span>财富</span>
                </Logo>
            </NavLeft>
            <NavTitle>
                <StockName>特变电工</StockName>
                <StockMeta>
                    <StockCode>600089</StockCode>
                    <Tag>融</Tag>
                    <Tag>沪股通</Tag>
                    <Tag>L1</Tag>
                    <MetaCaret />
                </StockMeta>
            </NavTitle>
            <NavRight>
                <AiIcon />
                <ShareIcon />
                <SearchIcon />
            </NavRight>
        </NavBar>
        <QuotePanel>
            <Price>
                <PriceValue>19.87</PriceValue>
                <PriceChange>
                    <ChangePercent>3.11%</ChangePercent>
                    <span>0.60</span>
                </PriceChange>
            </Price>
            {quotes.map((quote) => (
                <Quote key={quote.label} {...quote} />
            ))}
            <MoreCell>
                <MoreButton>更多</MoreButton>
            </MoreCell>
        </QuotePanel>
        <Notice>
            <SpeakerIcon />
            <NoticeText>
                股东大会：于<Num>2025-11-03</Num>召开<Num>2025</Num>年第四次临时股东…
            </NoticeText>
        </Notice>
        <Periods>
            {periods.map(({ title, latin, width, active, more }) => (
                <Period key={title} $width={width} $active={active}>
                    {title}
                    {latin ? <Latin>{latin}</Latin> : null}
                    {more ? <Corner /> : null}
                </Period>
            ))}
            <Settings>
                <GearIcon />
            </Settings>
        </Periods>
        <Legend>
            <LegendItem $color="#f2b64c">
                均价：<LegendNum>19.96</LegendNum>
            </LegendItem>
            <LegendItem $color={GREEN}>
                最新：<LegendNum>19.87</LegendNum>
                <LegendNum>-0.21</LegendNum>
                <LegendNum>-1.05%</LegendNum>
            </LegendItem>
        </Legend>
        <PriceChart />
        <VolumeHead>
            <Select>
                成交量
                <SelectCaret />
            </Select>
            <span>
                302.6<Unit>万</Unit>
            </span>
            <span>分时量: 28041</span>
            <span>↑</span>
            <span>
                现量: <CurrentVolume>28041</CurrentVolume>
            </span>
        </VolumeHead>
        <VolumeChart />
        <Dates>
            {dates.map((date) => (
                <span key={date}>{date}</span>
            ))}
        </Dates>
        <PromoWrap>
            <Promo>
                <HornIcon />
                <PromoText>【已汇总】今日盘面有哪些热点？一键查看&gt;&gt;</PromoText>
                <PromoDivider />
                <CloseIcon />
            </Promo>
        </PromoWrap>
        <Sections>
            {sections.map((title, key) => (
                <Section key={title} $active={key === 0}>
                    {title}
                </Section>
            ))}
        </Sections>
        <Cards>
            <Card>
                <CardArt width="386" height="80" viewBox="0 0 386 80">
                    <path d="M185 9h38V0h38v80h-76z" fill="#fcf1ef" />
                    <path d="M280 26h60l2 54h-24V62l-14 6v12h-24zM240 65h28v15h-28z" fill="#fae9e8" />
                    <path d="M360 0h20v80h-14z" fill="#fcf2f0" />
                </CardArt>
                <CardHead>
                    <RankIcon />
                    <CardTitle>人气榜</CardTitle>
                    <svg width="10" height="17" viewBox="0 0 10 17" fill="none" stroke="#aaa" strokeWidth="1.8">
                        <path d="M1 1l7 7.500L1 16" />
                    </svg>
                </CardHead>
                <CardText>
                    A股市场排名第<Rank>54</Rank>名
                </CardText>
            </Card>
            <Card>
                <CardArt width="386" height="80" viewBox="0 0 386 80">
                    <path d="M198 0h32l6 80h-28z" fill="#fcf1ef" />
                    <path d="M270 0l18 12 30-12h68v20L350 0z" fill="#fdf0ee" />
                    <text x="244" y="101" fontSize="116" fontWeight="900" fill="#faebea" fontFamily="Inter" textLength="132" lengthAdjust="spacingAndGlyphs">
                        VS
                    </text>
                </CardArt>
                <CardHead>
                    <VersusIcon />
                    <CardTitle>多空看盘</CardTitle>
                </CardHead>
            </Card>
        </Cards>
        <BottomBar>
            <IndexCell>
                <IndexCaret />
                <IndexValue>33293.02</IndexValue>
                <IndexRow>
                    <IndexName>电网设备</IndexName>
                    <IndexChange>1.57%</IndexChange>
                </IndexRow>
            </IndexCell>
            {actions.map(({ title, Icon }) => (
                <Action key={title}>
                    <ActionIcon>
                        <Icon />
                    </ActionIcon>
                    {title}
                </Action>
            ))}
            <HomeIndicator />
        </BottomBar>
        <Shade />
        <Handle>
            <svg width="18" height="56" viewBox="0 0 18 56" fill="none" stroke="#fff" strokeWidth="7" strokeLinecap="round" strokeLinejoin="round">
                <path d="M14 4Q5 22 4 28q1 6 10 24" />
            </svg>
        </Handle>
    </Page>
);

export default App;
